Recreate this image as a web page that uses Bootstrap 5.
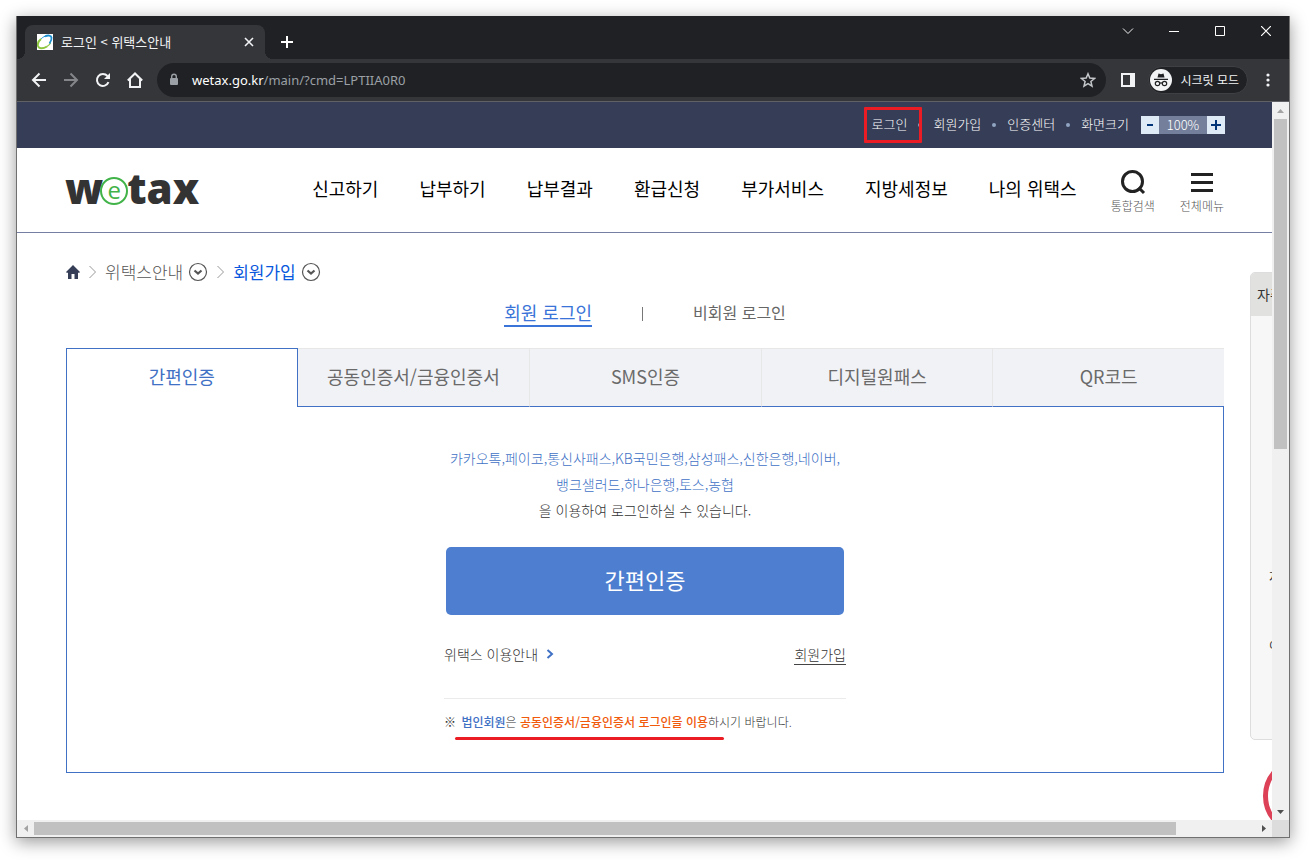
<!DOCTYPE html>
<html lang="ko">
<head>
<meta charset="utf-8">
<meta name="viewport" content="width=device-width, initial-scale=1">
<title>로그인 &lt; 위택스안내</title>
<link href="https://cdn.jsdelivr.net/npm/bootstrap@5.3.0/dist/css/bootstrap.min.css" rel="stylesheet">
<style>
  :root { --blue: #4071c5; --navy: #363e57; --ink: #555; }
  body { font-family: "Noto Sans CJK KR", sans-serif; font-size: 14px; line-height: 20px; color: var(--ink); background: #fff; padding: 16px 21px 22px 16px; }
  a { color: inherit; text-decoration: none; }
  button { color: inherit; background: none; border: 0; padding: 0; font: inherit; }
  svg { display: block; flex: none; }
  .browser { height: calc(100vh - 38px); min-height: 760px; border: 1px solid #707070; border-top: 0; box-shadow: 0 4px 16px rgba(0,0,0,.4); }

  /* browser chrome */
  .tabstrip { height: 43px; background: #202124; padding-left: 8px; color: #f1f3f4; }
  .browser-tab { width: 240px; height: 34px; background: #35363a; border-radius: 8px 8px 0 0; padding: 0 10px 0 12px; font-size: 13px; line-height: 18px; }
  .browser-tab::before, .browser-tab::after { content: ""; position: absolute; bottom: 0; width: 8px; height: 8px; }
  .browser-tab::before { left: -8px; background: radial-gradient(circle at 0 0, transparent 8px, #35363a 8px); }
  .browser-tab::after { right: -8px; background: radial-gradient(circle at 100% 0, transparent 8px, #35363a 8px); }
  .new-tab { margin-bottom: 11px; }
  .win-btn { width: 46px; height: 30px; display: grid; place-items: center; }
  .toolbar { height: 43px; background: #35363a; border-bottom: 1px solid #606164; padding: 0 13px 0 14px; color: #f1f3f4; }
  .tool-btn { width: 16px; height: 16px; }
  .omnibox { height: 34px; border-radius: 17px; background: #202124; margin: 0 -1px 0 -2px; padding: 0 10px 0 11px; font-family: "Noto Sans", sans-serif; font-size: 13px; color: #9aa0a6; }
  .omnibox b { color: #fff; font-weight: 400; }
  .incognito { height: 28px; border-radius: 14px; background: #202124; margin: 0 -4px 0 -3px; padding: 0 8px 0 1px; font-size: 12px; border: 1px solid #3f4043; }

  /* scroll bars */
  .vbar { width: 17px; background: #f0f0f0; }
  .hbar { height: 17px; background: #f0f0f0; }
  .bar-end { width: 17px; height: 17px; display: grid; place-items: center; }
  .thumb { background: #c1c1c1; }
  .vbar .thumb { width: 13px; }
  .hbar .thumb { height: 13px; }
  .corner { width: 17px; background: #dcdcdc; }

  /* site */
  .site { background: #fff; }
  .util { height: 46px; background: var(--navy); padding: 0 47px; color: #fff; font-size: 13px; font-weight: 300; }
  .util > a, .util > .size { margin-bottom: 2px; }
  .dot { width: 4px; height: 4px; border-radius: 2px; background: #91a5c3; margin: 0 11px; }
  .zoomer { height: 18px; background: #747f9b; margin-left: 12px; }
  .zoomer button { width: 18px; background: #deeaf5; color: #003478; display: grid; place-items: center; }
  .zoomer span { width: 48px; text-align: center; font-size: 13px; line-height: 18px; }
  .box-note { left: -8px; top: -7px; width: 58px; height: 36px; border: 3px solid #ec1c24; border-radius: 1px; }
  .site-head { height: 85px; padding: 0 48px; border-bottom: 1px solid #747fa3; }
  .logo { font-family: "Open Sans", sans-serif; font-weight: 800; font-size: 42px; line-height: 48px; color: #333; margin-bottom: 4px; }
  .logo i { width: 28px; height: 28px; border: 2px solid #41b348; border-radius: 50%; color: #41b348; font: 400 24px/21px "Open Sans", sans-serif; text-align: center; margin: 6px -1px 0 -3px; }
  .menu { gap: 41px; font-size: 18px; line-height: 28px; color: #000; margin: 0 34px 4px 0; }
  .quick { font-size: 12px; line-height: 16px; font-weight: 300; color: #555; gap: 3px; padding-top: 3px; }
  .quick + .quick { margin-left: 25px; }
  .crumbs { font-size: 17px; line-height: 24px; margin-top: 27px; font-weight: 300; }
  .crumbs .now { color: #0a58dd; font-weight: 400; }
  .crumbs button { margin: 0 4px 0 5px; }
  main { padding: 0 48px 0 49px; }
  .kind { gap: 50px; font-size: 16px; line-height: 25px; color: #666; margin: 16px 0 21px; }
  .kind a { padding-bottom: 2px; }
  .kind .on { font-size: 18px; padding: 0; color: #3a74d8; border-bottom: 2px solid #3a74d8; }
  .kind .rule { width: 1px; height: 14px; background: #777; }
  .auth-tabs button { height: 59px; padding-bottom: 4px; font-size: 18px; color: #6a6a6a; background: #f1f2f6; border-top: 1px solid #e7e7e7; border-bottom: 1px solid var(--blue); border-left: 1px solid #e7e7e7; }
  .auth-tabs .on { background: #fff; color: var(--blue); border: 1px solid var(--blue); border-bottom: 0; }
  .auth-tabs .on + button { border-left: 0; }
  .panel { border: 1px solid var(--blue); border-top: 0; padding: 38px 0; }
  .inner { width: 402px; }
  .lead-in { line-height: 26px; font-weight: 300; color: #333; }
  .lead-in em { font-style: normal; color: var(--blue); }
  .btn-auth { height: 68px; border-radius: 5px; background: #4d7ecf; color: #fff; font-size: 22px; margin: 24px 2px 27px; padding: 0 0 4px; }
  .btn-auth:hover { background: #4071c5; color: #fff; }
  .links { line-height: 24px; font-weight: 300; color: #333; }
  .links .join { line-height: 20px; border-bottom: 1px solid #444; }
  .corp { border-top: 1px solid #ebebeb; margin-top: 32px; padding-top: 11px; font-size: 12px; line-height: 24px; font-weight: 300; color: #333; }
  .corp b { font-weight: 500; }
  .corp .b1 { color: var(--blue); margin-left: 2px; }
  .corp .b2 { color: #f05a0a; }
  .line-note { left: 11px; bottom: -6px; width: 269px; height: 3px; border-radius: 2px; background: #ec1c24; }
  .float-menu { top: 170px; right: -72px; width: 94px; height: 468px; background: #f7f7f7; border: 1px solid #ddd; border-radius: 5px; font-size: 14px; color: #333; }
  .float-menu h2 { height: 43px; margin: 0; padding-left: 6px; font-size: 14px; line-height: 42px; font-weight: 400; background: #e1e1df; }
  .float-menu ul { margin: 251px 0 0 18px; padding: 0; list-style: none; font-size: 12px; }
  .float-menu li { height: 69px; }
  .stamp { top: 655px; right: -69px; width: 78px; height: 78px; border: 5px solid #dc4157; border-radius: 50%; }
</style>
</head>
<body>
<div class="browser d-flex flex-column">
  <div class="tabstrip d-flex align-items-end">
    <div class="browser-tab position-relative d-flex align-items-center">
      <svg width="16" height="16" viewBox="0 0 16 16"><rect width="16" height="16" fill="#fff"/><path d="M4 5C1.500 7 .5 10 1 12c1 3 5 3 9 .5" fill="none" stroke="#8cc63f" stroke-width="2"/><path d="M10 12.500c2-1.200 3-2.500 3.500-3.500" fill="none" stroke="#8cc63f" stroke-width="1.200"/><path d="M4 5c1-1 2-2 4-2.700" fill="none" stroke="#1c8fd0"/><path d="M8 2.300C11 1 14 1.200 14.500 3.500c.3 2-.5 4-2 6" fill="none" stroke="#1c8fd0" stroke-width="1.800"/></svg>
      <span class="ms-2 me-auto">로그인 &lt; 위택스안내</span>
      <button aria-label="탭 닫기"><svg width="12" height="12" viewBox="0 0 12 12" stroke="currentColor" stroke-width="1.600"><path d="M2 2l8 8M10 2l-8 8"/></svg></button>
    </div>
    <button class="new-tab ms-3" aria-label="새 탭"><svg width="12" height="12" viewBox="0 0 12 12" stroke="#fff" stroke-width="2"><path d="M6 0v12M0 6h12"/></svg></button>
    <div class="d-flex align-self-start ms-auto">
      <button class="win-btn" aria-label="탭 검색"><svg width="12" height="12" viewBox="0 0 12 12" fill="none" stroke="currentColor"><path d="M1 3.500l5 5 5-5"/></svg></button>
      <button class="win-btn" aria-label="최소화"><svg width="10" height="10"><path d="M0 5.500h10" stroke="#fff"/></svg></button>
      <button class="win-btn" aria-label="최대화"><svg width="10" height="10"><path d="M.5.5h9v9h-9z" fill="none" stroke="#fff"/></svg></button>
      <button class="win-btn" aria-label="닫기"><svg width="10" height="10"><path d="M0 0l10 10M10 0L0 10" stroke="#fff" stroke-width="1.200"/></svg></button>
    </div>
  </div>
  <div class="toolbar d-flex align-items-center gap-3">
    <button class="tool-btn" aria-label="뒤로"><svg width="16" height="16" viewBox="0 0 16 16" fill="none" stroke="currentColor" stroke-width="2"><path d="M15 8H2M8.500 1.500L2 8l6.500 6.500"/></svg></button>
    <button class="tool-btn" aria-label="앞으로"><svg width="16" height="16" viewBox="0 0 16 16" fill="none" stroke="#84868a" stroke-width="2"><path d="M1 8h13M7.500 1.500L14 8l-6.500 6.500"/></svg></button>
    <button class="tool-btn" aria-label="새로고침"><svg width="16" height="16" viewBox="0 0 16 16"><path d="M13.500 10.200A6 6 0 1 1 12.500 4" fill="none" stroke="currentColor" stroke-width="2"/><path d="M15 1v6H9z" fill="currentColor"/></svg></button>
    <button class="tool-btn" aria-label="홈"><svg width="16" height="16" viewBox="0 0 16 16" fill="none" stroke="currentColor" stroke-width="2"><path d="M.8 8.500L8 1.500l7.200 7M3 7v8h10V7"/></svg></button>
    <div class="omnibox flex-grow-1 d-flex align-items-center">
      <svg width="12" height="14" viewBox="0 0 12 14"><rect x="2" y="5" width="8" height="7" rx="1" fill="#9aa0a6"/><path d="M3.700 6V3.500a2.300 2.300 0 0 1 4.600 0V6" fill="none" stroke="#9aa0a6" stroke-width="1.400"/></svg>
      <span class="ms-2 ps-1 me-auto"><b>wetax.go.kr</b>/main/?cmd=LPTIIA0R0</span>
      <button aria-label="북마크"><svg width="16" height="16" viewBox="0 0 16 16" fill="none" stroke="#c4c7ca" stroke-width="1.500"><path d="M8 1.800l1.800 4.300 4.700.4-3.600 3 1.100 4.600L8 11.700l-4 2.400 1.100-4.600-3.600-3 4.700-.4z"/></svg></button>
    </div>
    <button aria-label="측면 패널"><svg width="14" height="14" viewBox="0 0 14 14"><path d="M0 0h14v14H0zM2 2v10h7V2z" fill="#f1f3f4" fill-rule="evenodd"/></svg></button>
    <button class="incognito d-flex align-items-center">
      <svg width="22" height="22" viewBox="0 0 22 22"><circle cx="11" cy="11" r="11" fill="#f1f3f4"/><path d="M7.500 8.500l1-4 2.500.7 2.500-.7 1 4zM4 9.800h14v1.200H4z" fill="#202124"/><g fill="none" stroke="#202124" stroke-width="1.200"><circle cx="7.500" cy="14.500" r="2.200"/><circle cx="14.500" cy="14.500" r="2.200"/><path d="M9.700 14.200q1.300-.8 2.600 0"/></g></svg>
      <span class="ms-2">시크릿 모드</span>
    </button>
    <button aria-label="메뉴"><svg width="16" height="16" viewBox="0 0 16 16" fill="#f1f3f4"><circle cx="8" cy="3" r="1.600"/><circle cx="8" cy="8" r="1.600"/><circle cx="8" cy="13" r="1.600"/></svg></button>
  </div>

  <div class="d-flex flex-grow-1 overflow-hidden">
    <div class="site flex-grow-1 position-relative overflow-hidden">
      <div class="util d-flex align-items-center justify-content-end">
        <a href="#" class="position-relative">로그인<span class="box-note position-absolute"></span></a><span class="dot"></span>
        <a href="#">회원가입</a><span class="dot"></span>
        <a href="#">인증센터</a><span class="dot"></span>
        <span class="size">화면크기</span>
        <div class="zoomer d-flex"><button aria-label="축소"><svg width="6" height="2"><path d="M0 0h6v2H0z" fill="currentColor"/></svg></button><span>100%</span><button aria-label="확대"><svg width="10" height="10"><path d="M4 0h2v4h4v2H6v4H4V6H0V4h4z" fill="currentColor"/></svg></button></div>
      </div>
      <header class="site-head d-flex align-items-center">
        <a href="#" class="logo d-flex me-auto align-items-center"><span>w</span><i>e</i><span>tax</span></a>
        <nav class="menu d-flex">
          <a href="#">신고하기</a><a href="#">납부하기</a><a href="#">납부결과</a><a href="#">환급신청</a><a href="#">부가서비스</a><a href="#">지방세정보</a><a href="#">나의 위택스</a>
        </nav>
        <button class="quick d-flex flex-column align-items-center"><svg width="26" height="26" viewBox="0 0 26 26" fill="none" stroke="#222" stroke-width="3"><circle cx="12.500" cy="12.500" r="10"/><path d="M18.500 18.500l5.500 5.500"/></svg>통합검색</button>
        <button class="quick d-flex flex-column align-items-center"><svg width="22" height="26" viewBox="0 0 22 26" fill="#222"><path d="M0 4h22v3H0zM0 12h22v3H0zM0 20h22v3H0z"/></svg>전체메뉴</button>
      </header>

      <main>
        <nav class="crumbs d-flex align-items-center" aria-label="현재 위치">
          <a href="#" aria-label="홈"><svg width="14" height="14" viewBox="0 0 14 14" fill="#363e57"><path d="M7 0l7 7-1 1-1-.6V14H8.500V9h-3v5H2V7.400L1 8 0 7z"/></svg></a>
          <svg class="ms-2 me-2" width="9" height="14" viewBox="0 0 9 14" fill="none" stroke="#999"><path d="M1.500 1l6 6-6 6"/></svg>
          <a href="#">위택스안내</a>
          <button aria-label="위택스안내 펼치기"><svg width="20" height="20" viewBox="0 0 20 20" fill="none" stroke="#555"><circle cx="10" cy="10" r="8.500" stroke-width="1.200"/><path d="M6.500 8.500l3.500 3 3.500-3" stroke-width="2.200"/></svg></button>
          <svg class="ms-1 me-2" width="9" height="14" viewBox="0 0 9 14" fill="none" stroke="#999"><path d="M1.500 1l6 6-6 6"/></svg>
          <a href="#" class="now">회원가입</a>
          <button aria-label="회원가입 펼치기"><svg width="20" height="20" viewBox="0 0 20 20" fill="none" stroke="#555"><circle cx="10" cy="10" r="8.500" stroke-width="1.200"/><path d="M6.500 8.500l3.500 3 3.500-3" stroke-width="2.200"/></svg></button>
        </nav>
        <div class="kind d-flex justify-content-center align-items-center">
          <a href="#" class="on">회원 로그인</a><span class="rule"></span><a href="#">비회원 로그인</a>
        </div>
        <div class="auth-tabs row row-cols-5 g-0" role="tablist">
          <button class="col on" role="tab" aria-selected="true">간편인증</button>
          <button class="col" role="tab">공동인증서/금융인증서</button>
          <button class="col" role="tab">SMS인증</button>
          <button class="col" role="tab">디지털원패스</button>
          <button class="col" role="tab">QR코드</button>
        </div>
        <section class="panel">
          <div class="inner mx-auto d-flex flex-column">
            <p class="lead-in text-center text-nowrap mb-0"><em>카카오톡,페이코,통신사패스,KB국민은행,삼성패스,신한은행,네이버,<br>뱅크샐러드,하나은행,토스,농협</em><br>을 이용하여 로그인하실 수 있습니다.</p>
            <button class="btn btn-auth">간편인증</button>
            <div class="links d-flex justify-content-between align-items-center">
              <a href="#" class="d-flex align-items-center gap-2">위택스 이용안내 <svg width="8" height="10" viewBox="0 0 8 10" fill="none" stroke="#4071c5" stroke-width="2"><path d="M1.500 1L6 5 1.500 9"/></svg></a>
              <a href="#" class="join">회원가입</a>
            </div>
            <div class="corp"><p class="position-relative mb-0">※ <b class="b1">법인회원</b>은 <b class="b2">공동인증서/금융인증서 로그인을 이용</b>하시기 바랍니다.<span class="line-note position-absolute"></span></p></div>
          </div>
        </section>
      </main>

      <aside class="float-menu position-absolute overflow-hidden"><h2>자주</h2><ul><li><a href="#">지</a></li><li><a href="#">이</a></li></ul></aside>
      <div class="stamp position-absolute"></div>
    </div>
    <div class="vbar d-flex flex-column">
      <div class="bar-end"><svg width="7" height="4"><path d="M0 4l3.500-4L7 4z" fill="#a3a3a3"/></svg></div>
      <div class="flex-grow-1"><div class="thumb mx-auto" style="height:48.2%"></div></div>
      <div class="bar-end"><svg width="7" height="4"><path d="M0 0h7L3.500 4z" fill="#505050"/></svg></div>
    </div>
  </div>
  <div class="hbar d-flex">
    <div class="bar-end"><svg width="4" height="7"><path d="M4 0v7L0 3.500z" fill="#a3a3a3"/></svg></div>
    <div class="flex-grow-1 d-flex align-items-center"><div class="thumb" style="width:93.5%"></div></div>
    <div class="bar-end"><svg width="4" height="7"><path d="M0 0v7l4-3.500z" fill="#505050"/></svg></div>
    <div class="corner"></div>
  </div>
</div>
<script src="https://cdn.jsdelivr.net/npm/bootstrap@5.3.0/dist/js/bootstrap.bundle.min.js"></script>
</body>
</html>
